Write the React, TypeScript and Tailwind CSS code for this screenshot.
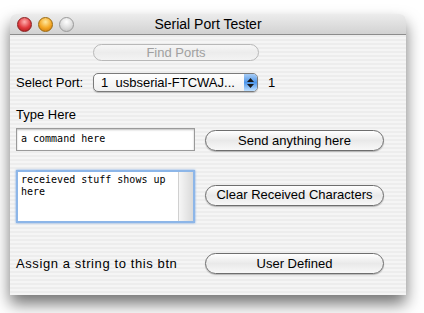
import React from 'react';

function AquaButton({ label, className = '', disabled = false }: { label: string; className?: string; disabled?: boolean }) {
  return (
    <div
      className={`flex items-center justify-center rounded-full border ${
        disabled
          ? 'border-[#b8b8b8] bg-gradient-to-b from-[#f7f7f7] via-[#ececec] to-[#f3f3f3] text-[#a0a0a0]'
          : 'border-[#6e6e6e] bg-gradient-to-b from-[#ffffff] via-[#e9e9e9] to-[#f8f8f8] text-black shadow-[0_1px_1px_rgba(0,0,0,0.25)]'
      } ${className}`}
    >
      {label}
    </div>
  );
}

function Light({ color }: { color: string }) {
  return <div className={`h-[15px] w-[15px] rounded-full border ${color}`} />;
}

export default function App() {
  return (
    <div className="h-[313px] w-[424px] overflow-hidden bg-white font-['Liberation_Sans',sans-serif] text-[13px] text-black">
      <div className="ml-[10px] mt-[14px] w-[396px] rounded-t-[6px] shadow-[0_9px_16px_rgba(0,0,0,0.55)]">
        {/* Title bar */}
        <div className="relative flex h-[21px] items-center rounded-t-[6px] border-b border-[#8c8c8c] bg-gradient-to-b from-[#ececec] to-[#d2d2d2] px-[7px]">
          <div className="flex gap-[6px]">
            <Light color="border-[#8a2020] bg-[radial-gradient(circle_at_50%_30%,#ffb0b0,#e0383c_55%,#a01818)]" />
            <Light color="border-[#9a6a10] bg-[radial-gradient(circle_at_50%_30%,#ffe9a0,#f4a622_55%,#c07010)]" />
            <Light color="border-[#9a9a9a] bg-[radial-gradient(circle_at_50%_30%,#ffffff,#dcdcdc_55%,#b8b8b8)]" />
          </div>
          <div className="absolute inset-0 flex items-center justify-center text-[14px]">Serial Port Tester</div>
        </div>

        {/* Body */}
        <div className="flex h-[260px] flex-col bg-[repeating-linear-gradient(180deg,#ededed_0px,#ededed_2px,#f5f5f5_2px,#f5f5f5_4px)] px-[6px]">
          <div className="mt-[9px] flex">
            <AquaButton label="Find Ports" disabled className="ml-[77px] h-[17px] w-[166px]" />
          </div>

          <div className="mt-[12px] flex h-[19px] items-center">
            <span className="w-[77px]">Select Port:</span>
            <div className="flex h-[19px] w-[165px] items-center rounded-[5px] border border-[#7a7a7a] bg-gradient-to-b from-white to-[#f0f0f0] shadow-[0_1px_1px_rgba(0,0,0,0.2)]">
              <span className="flex-1 pl-[7px] leading-none">1&nbsp;&nbsp;usbserial-FTCWAJ...</span>
              <div className="flex h-full w-[13px] flex-col items-center justify-center gap-[2px] rounded-r-[4px] bg-gradient-to-b from-[#a8cdf5] via-[#4d95e8] to-[#bfe0ff]">
                <svg width="7" height="4" viewBox="0 0 7 4"><path d="M0 4 L3.5 0 L7 4 Z" fill="#1a1a1a" /></svg>
                <svg width="7" height="4" viewBox="0 0 7 4"><path d="M0 0 L3.5 4 L7 0 Z" fill="#1a1a1a" /></svg>
              </div>
            </div>
            <span className="ml-[10px]">1</span>
          </div>

          <div className="mt-[15px] h-[16px] leading-[16px]">Type Here</div>

          <div className="mt-[5px] flex items-start">
            <div className="flex h-[23px] w-[179px] items-center border border-[#9a9a9a] bg-white pb-[2px] pl-[4px] font-['DejaVu_Sans_Mono',monospace] text-[10px] shadow-[inset_0_1px_2px_rgba(0,0,0,0.25)]">
              a command here
            </div>
            <AquaButton label="Send anything here" className="ml-[10px] mt-[2px] h-[21px] w-[179px]" />
          </div>

          <div className="mt-[19px] flex items-center">
            <div className="flex h-[53px] w-[179px] border-2 border-[#8db6e8] bg-white shadow-[0_0_2px_#6d9fe0]">
              <div className="flex-1 whitespace-pre-wrap pl-[3px] pt-[2px] font-['DejaVu_Sans_Mono',monospace] text-[10px] leading-[12px]">
                receieved stuff shows up here
              </div>
              <div className="w-[15px] border-l border-[#d0d0d0] bg-gradient-to-r from-[#f6f6f6] via-[#e8e8e8] to-[#dadada]" />
            </div>
            <AquaButton label="Clear Received Characters" className="ml-[10px] mt-[-3px] h-[21px] w-[179px]" />
          </div>

          <div className="mt-[30px] flex items-center">
            <span className="w-[189px] tracking-[0.6px]">Assign a string to this btn</span>
            <AquaButton label="User Defined" className="h-[21px] w-[179px]" />
          </div>
        </div>
      </div>
    </div>
  );
}
